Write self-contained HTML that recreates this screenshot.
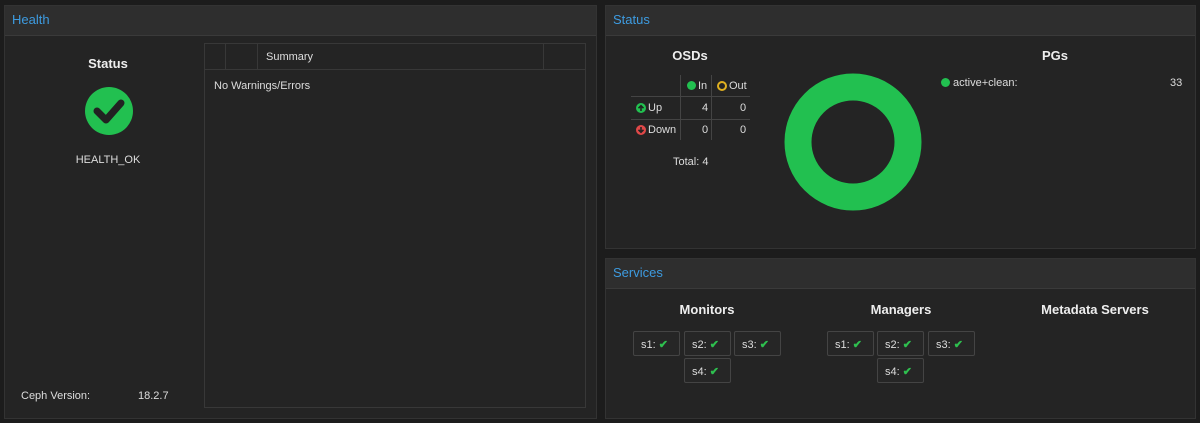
<!DOCTYPE html><html><head><style>
body{margin:0;width:1200px;height:423px;background:#1c1c1c;font-family:"Liberation Sans",sans-serif;color:#ddd;position:relative;overflow:hidden;font-size:11px}
div,span{position:absolute;box-sizing:border-box}
.panel{background:#242424;border:1px solid #333}
.hdr{left:0;right:0;top:0;height:30px;background:#2e2e2e;border-bottom:1px solid #3a3a3a;color:#3d9be0;font-size:13px;padding:6px 0 0 7px}
.t{font-weight:bold;font-size:13px;color:#eee;text-align:center}
.box{width:47px;height:25px;border:1px solid #444;border-radius:2px;background:#262626;font-size:11px;color:#ddd;padding:6px 0 0 7px}
.box b{color:#2ec04f;font-weight:bold}
.ln{background:#444}
</style></head><body>
<div class="panel" style="left:4px;top:5px;width:593px;height:414px">
 <div class="hdr">Health</div>
</div>
<div class="t" style="left:58px;top:56px;width:100px">Status</div>
<svg style="position:absolute;left:85px;top:87px" width="48" height="48"><circle cx="24" cy="24" r="24" fill="#22c050"/><path d="M12 24 L21 33 L36 16" stroke="#222" stroke-width="7" fill="none" stroke-linecap="round" stroke-linejoin="round"/></svg>
<div style="left:58px;top:154px;width:100px;text-align:center;font-size:11px">HEALTH_OK</div>
<div style="left:21px;top:390px">Ceph Version:</div>
<div style="left:138px;top:390px">18.2.7</div>
<div style="left:204px;top:43px;width:382px;height:365px;border:1px solid #383838">
 <div style="left:0;right:0;top:0;height:26px;border-bottom:1px solid #383838"></div>
 <div class="ln" style="left:20px;top:0;width:1px;height:26px;background:#383838"></div>
 <div class="ln" style="left:52px;top:0;width:1px;height:26px;background:#383838"></div>
 <div class="ln" style="left:338px;top:0;width:1px;height:26px;background:#383838"></div>
 <div style="left:61px;top:7px">Summary</div>
 <div style="left:9px;top:36px">No Warnings/Errors</div>
</div>

<div class="panel" style="left:605px;top:5px;width:591px;height:244px">
 <div class="hdr">Status</div>
</div>
<div class="t" style="left:640px;top:48px;width:100px">OSDs</div>
<div class="ln" style="left:680px;top:75px;width:1px;height:65px"></div>
<div class="ln" style="left:711px;top:75px;width:1px;height:65px"></div>
<div class="ln" style="left:631px;top:96px;width:119px;height:1px"></div>
<div class="ln" style="left:631px;top:119px;width:119px;height:1px"></div>
<div style="left:687px;top:81px;width:9px;height:9px;border-radius:50%;background:#22c050"></div>
<div style="left:698px;top:80px">In</div>
<div style="left:717px;top:81px;width:10px;height:10px;border-radius:50%;border:2px solid #e0b020"></div>
<div style="left:729px;top:80px">Out</div>
<svg style="position:absolute;left:636px;top:103px" width="10" height="10"><circle cx="5" cy="5" r="5" fill="#22c050"/><path d="M5 8V3M2.5 5.2L5 2.7 7.5 5.2" stroke="#222" stroke-width="1.6" fill="none"/></svg>
<div style="left:648px;top:102px">Up</div>
<svg style="position:absolute;left:636px;top:125px" width="10" height="10"><circle cx="5" cy="5" r="5" fill="#e04848"/><path d="M5 2V7M2.5 4.8L5 7.3 7.5 4.8" stroke="#222" stroke-width="1.6" fill="none"/></svg>
<div style="left:648px;top:124px">Down</div>
<div style="left:702px;top:102px">4</div><div style="left:740px;top:102px">0</div>
<div style="left:702px;top:124px">0</div><div style="left:740px;top:124px">0</div>
<div style="left:673px;top:156px">Total: 4</div>
<svg style="position:absolute;left:784px;top:73px" width="138" height="138"><circle cx="69" cy="69" r="55" fill="none" stroke="#22c050" stroke-width="27"/></svg>
<div class="t" style="left:1015px;top:48px;width:80px">PGs</div>
<div style="left:941px;top:78px;width:9px;height:9px;border-radius:50%;background:#22c050"></div>
<div style="left:953px;top:77px">active+clean:</div>
<div style="left:1170px;top:77px">33</div>

<div class="panel" style="left:605px;top:258px;width:591px;height:161px">
 <div class="hdr">Services</div>
</div>
<div class="t" style="left:657px;top:302px;width:100px">Monitors</div>
<div class="t" style="left:851px;top:302px;width:100px">Managers</div>
<div class="t" style="left:1030px;top:302px;width:130px">Metadata Servers</div>
<div class="box" style="left:633px;top:331px">s1: <b>✔</b></div>
<div class="box" style="left:684px;top:331px">s2: <b>✔</b></div>
<div class="box" style="left:734px;top:331px">s3: <b>✔</b></div>
<div class="box" style="left:684px;top:358px">s4: <b>✔</b></div>
<div class="box" style="left:827px;top:331px">s1: <b>✔</b></div>
<div class="box" style="left:877px;top:331px">s2: <b>✔</b></div>
<div class="box" style="left:928px;top:331px">s3: <b>✔</b></div>
<div class="box" style="left:877px;top:358px">s4: <b>✔</b></div>
</body></html>
